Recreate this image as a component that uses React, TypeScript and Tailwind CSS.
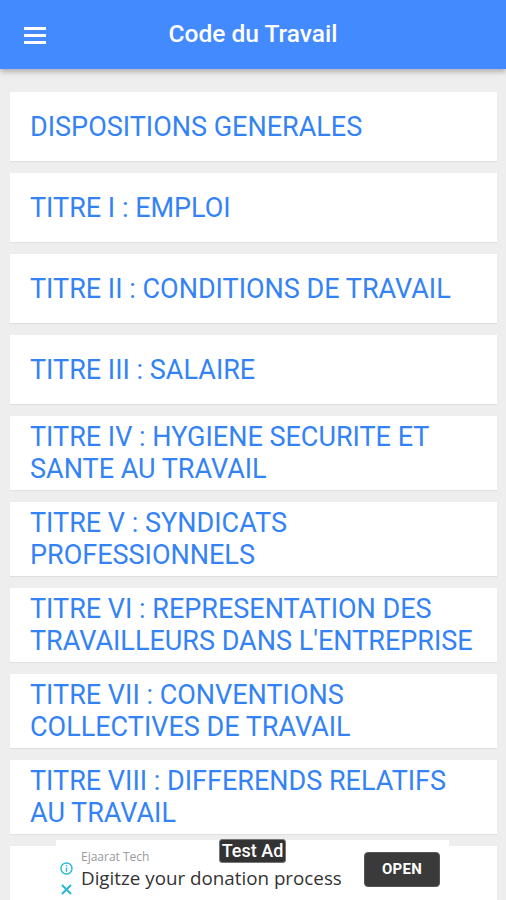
import React from "react";

const items: string[][] = [
  ["DISPOSITIONS GENERALES"],
  ["TITRE I : EMPLOI"],
  ["TITRE II : CONDITIONS DE TRAVAIL"],
  ["TITRE III : SALAIRE"],
  ["TITRE IV : HYGIENE SECURITE ET", "SANTE AU TRAVAIL"],
  ["TITRE V : SYNDICATS", "PROFESSIONNELS"],
  ["TITRE VI : REPRESENTATION DES", "TRAVAILLEURS DANS L'ENTREPRISE"],
  ["TITRE VII : CONVENTIONS", "COLLECTIVES DE TRAVAIL"],
  ["TITRE VIII : DIFFERENDS RELATIFS", "AU TRAVAIL"],
  [],
];

export default function App() {
  return (
    <div
      className="relative w-[506px] h-[900px] overflow-hidden bg-[#eeeeee]"
      style={{ fontFamily: "Roboto, 'Liberation Sans', sans-serif" }}
    >
      <header className="relative z-10 h-[69px] bg-[#448aff] flex items-center px-[24px] shadow-[0_3px_5px_rgba(0,0,0,0.25)]">
        <button className="w-[22px] h-[17px] mt-[1px] flex flex-col justify-between shrink-0">
          <span className="block h-[3px] w-full bg-white" />
          <span className="block h-[3px] w-full bg-white" />
          <span className="block h-[3px] w-full bg-white" />
        </button>
        <h1 className="flex-1 text-center text-white text-[24.5px] font-medium pr-[22px]">
          Code du Travail
        </h1>
      </header>

      <main className="flex flex-col gap-[12px] pt-[23px] pl-[10px] pr-[9px]">
        {items.map((lines, i) => (
          <div
            key={i}
            className={`bg-white flex items-center pl-[20px] shadow-[0_1px_1px_rgba(0,0,0,0.06)] ${
              lines.length > 1 ? "h-[74px]" : "h-[69px]"
            }`}
          >
            <div className="text-[#3483f6] text-[27px] leading-[32px]">
              {lines.map((l, j) => (
                <div key={j} className="whitespace-nowrap">
                  {l}
                </div>
              ))}
            </div>
          </div>
        ))}
      </main>

      <div className="absolute left-[56px] top-[840px] w-[393px] h-[60px] bg-white flex items-center pl-[4px] pr-[9px]">
        <div className="absolute left-[163px] top-[-1px] h-[24px] w-[67px] rounded-[3px] bg-[#333333] border border-[#777] flex items-center justify-center text-white text-[18px] font-medium leading-none">
          Test Ad
        </div>
        <div className="self-end pb-[4px] flex flex-col gap-[8px] w-[13px] shrink-0">
          <svg width="13" height="13" viewBox="0 0 13 13">
            <circle cx="6.5" cy="6.5" r="5.5" fill="none" stroke="#2bb7d6" strokeWidth="1.4" />
            <rect x="5.8" y="5.5" width="1.4" height="4.2" fill="#2bb7d6" />
            <rect x="5.8" y="3" width="1.4" height="1.4" fill="#2bb7d6" />
          </svg>
          <svg width="13" height="13" viewBox="0 0 13 13">
            <path d="M2 2 L11 11 M11 2 L2 11" stroke="#2bb7d6" strokeWidth="2" />
          </svg>
        </div>
        <div
          className="flex-1 flex flex-col ml-[8px]"
          style={{ fontFamily: "'Open Sans', sans-serif" }}
        >
          <div className="text-[12px] leading-[16px] text-[#9a9a9a]">Ejaarat Tech</div>
          <div className="text-[18.8px] leading-[26px] text-[#333] whitespace-nowrap">
            Digitze your donation process
          </div>
        </div>
        <button className="w-[76px] h-[35px] mt-[-1px] shrink-0 rounded-[4px] bg-[#3a3a3a] border border-[#555] text-white text-[15px] font-bold tracking-[0.3px]">
          OPEN
        </button>
      </div>
    </div>
  );
}
